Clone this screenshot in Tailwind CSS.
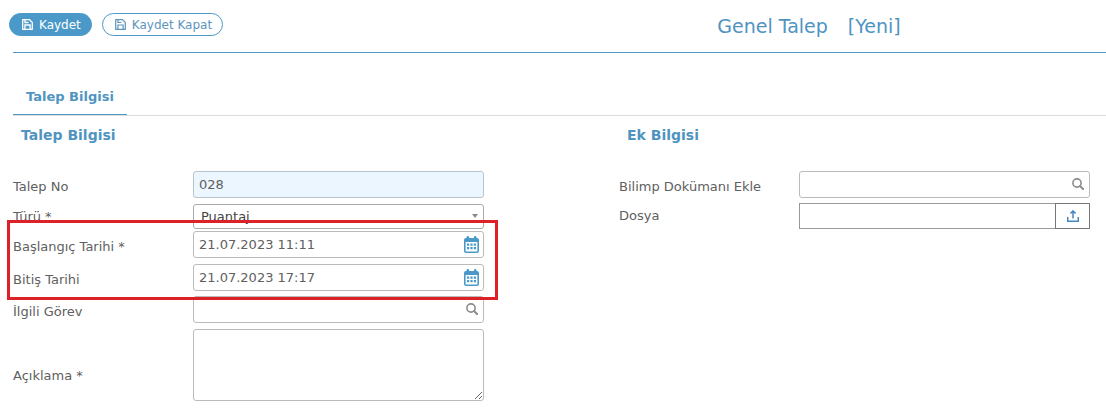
<!DOCTYPE html>
<html lang="tr">
<head>
  <meta charset="UTF-8">
  <meta name="viewport" content="width=device-width, initial-scale=1.0">
  <title>Genel Talep [Yeni]</title>
  <script src="https://cdn.jsdelivr.net/npm/@tailwindcss/browser@4"></script>
</head>
<body class="bg-white font-['DejaVu_Sans',sans-serif] text-[13px] text-[#606060]">

  <!-- header -->
  <header class="flex h-[52px] items-center pb-[3px]">
    <div class="flex w-[512px] gap-[10px] pl-[9px] text-[12px]">
      <button type="button" class="flex h-[23px] items-center gap-[6px] rounded-full border border-[#4a99c8] bg-[#4a99c8] pr-[10px] pl-3 font-medium text-white">
        <svg class="size-[11px]" viewBox="0 0 11 11" fill="none" stroke="currentColor" stroke-width="1.3"><path d="M.7.7h6.800l2.800 2.800v6.800H.7z" stroke-linejoin="round"/><path d="M3 1v2.500h3.500"/><path d="M2.900 10.200V6h5.200v4.200"/></svg>
        Kaydet
      </button>
      <button type="button" class="flex h-[23px] items-center gap-[6px] rounded-full border border-[#4a99c8] bg-white pr-[10px] pl-3 text-[#5d94bd]">
        <svg class="size-[11px]" viewBox="0 0 11 11" fill="none" stroke="currentColor" stroke-width="1.2"><path d="M.7.7h6.800l2.800 2.800v6.800H.7z" stroke-linejoin="round"/><path d="M3 1v2.500h3.500"/><path d="M2.900 10.200V6h5.200v4.200"/></svg>
        Kaydet Kapat
      </button>
    </div>
    <h1 class="flex flex-1 justify-center gap-[20px] pt-1 text-[19px] text-[#4f94c1]"><span>Genel Talep</span><span>[Yeni]</span></h1>
  </header>

  <!-- tabs -->
  <nav class="ml-[13px] border-t border-[#5599c5] pt-[29px]">
    <div class="flex border-b border-[#dcdcdc]">
      <a href="#talep" class="border-b border-[#4a99c8] px-[13px] pt-[6px] pb-2 leading-[18px] font-bold text-[#4f94c1]">Talep Bilgisi</a>
    </div>
  </nav>

  <!-- form -->
  <form id="talep" class="grid grid-cols-2 gap-x-[135px] pt-[10px] pr-4 pl-[13px]">
    <section>
      <h2 class="pl-2 text-[14px] leading-[18px] font-bold text-[#4f94c1]">Talep Bilgisi</h2>

      <div class="mt-[27px] flex items-center">
        <label for="no" class="w-[180px] pt-1">Talep No</label>
        <input id="no" type="text" value="028" class="h-[27px] min-w-0 flex-1 rounded-[3px] border border-[#b9c3cb] bg-[#ecf6fe] px-[5px]">
      </div>

      <div class="mt-[6px] flex items-center">
        <label for="tur" class="w-[180px]">Türü *</label>
        <div class="relative flex flex-1">
          <select id="tur" class="h-[25px] w-full appearance-none rounded-[3px] border border-[#aaaaaa] bg-white px-[7px] text-[#444]">
            <option>Puantaj</option>
          </select>
          <svg class="pointer-events-none absolute top-[10px] right-[6px] h-[4px] w-[6px]" viewBox="0 0 6 4" fill="#888"><path d="M0 0h6L3 4z"/></svg>
        </div>
      </div>

      <!-- highlighted date range -->
      <div class="relative mt-[2px]">
        <div class="flex items-center">
          <label for="baslangic" class="w-[180px] pt-1">Başlangıç Tarihi *</label>
          <div class="relative flex flex-1">
            <input id="baslangic" type="text" value="21.07.2023 11:11" class="h-[27px] w-full rounded-[3px] border border-[#bbb] px-[5px]">
            <button type="button" aria-label="Takvim" class="absolute top-[5px] right-[5px]">
              <svg class="h-[17px] w-[15px]" viewBox="0 0 15 17"><path fill="#4a99c8" fill-rule="evenodd" d="M2 2h11a2 2 0 0 1 2 2v11a2 2 0 0 1-2 2H2a2 2 0 0 1-2-2V4a2 2 0 0 1 2-2zM1.600 6v9.400h11.800V6z"/><path stroke="#4a99c8" stroke-width="2.600" stroke-linecap="round" d="M3.800 1.300v2.500M11.200 1.300v2.500"/><path fill="#4a99c8" d="M3 7.500h2.200v2.200H3zM6.400 7.500h2.200v2.200H6.400zM9.800 7.500H12v2.200H9.800zM3 11h2.200v2.200H3zM6.400 11h2.200v2.200H6.400zM9.800 11H12v2.200H9.800z"/></svg>
            </button>
          </div>
        </div>
        <div class="mt-[6px] flex items-center">
          <label for="bitis" class="w-[180px] pt-1">Bitiş Tarihi</label>
          <div class="relative flex flex-1">
            <input id="bitis" type="text" value="21.07.2023 17:17" class="h-[27px] w-full rounded-[3px] border border-[#bbb] px-[5px]">
            <button type="button" aria-label="Takvim" class="absolute top-[5px] right-[5px]">
              <svg class="h-[17px] w-[15px]" viewBox="0 0 15 17"><path fill="#4a99c8" fill-rule="evenodd" d="M2 2h11a2 2 0 0 1 2 2v11a2 2 0 0 1-2 2H2a2 2 0 0 1-2-2V4a2 2 0 0 1 2-2zM1.600 6v9.400h11.800V6z"/><path stroke="#4a99c8" stroke-width="2.600" stroke-linecap="round" d="M3.800 1.300v2.500M11.200 1.300v2.500"/><path fill="#4a99c8" d="M3 7.500h2.200v2.200H3zM6.400 7.500h2.200v2.200H6.400zM9.800 7.500H12v2.200H9.800zM3 11h2.200v2.200H3zM6.400 11h2.200v2.200H6.400zM9.800 11H12v2.200H9.800z"/></svg>
            </button>
          </div>
        </div>
        <div class="pointer-events-none absolute -top-[11px] -right-[14px] -bottom-[9px] -left-[6px] z-10 border-3 border-[#dc2228]"></div>
      </div>

      <div class="mt-[5px] flex items-center">
        <label for="gorev" class="w-[180px] pt-1">İlgili Görev</label>
        <div class="relative flex flex-1">
          <input id="gorev" type="text" class="h-[27px] w-full rounded-[3px] border border-[#bbb] px-[5px]">
          <button type="button" aria-label="Ara" class="absolute top-[7px] right-[6px]">
            <svg class="size-[12px]" viewBox="0 0 12 12" fill="none" stroke="#8c8c8c"><circle cx="5" cy="5" r="4.100" stroke-width="1.600"/><path d="M8 8l3.300 3.300" stroke-width="2" stroke-linecap="round"/></svg>
          </button>
        </div>
      </div>

      <div class="mt-[6px] flex items-center">
        <label for="aciklama" class="w-[180px] pt-[22px]">Açıklama *</label>
        <textarea id="aciklama" class="h-[72px] min-w-0 flex-1 resize-y rounded-[3px] border border-[#bbb] px-[5px]"></textarea>
      </div>
    </section>

    <section>
      <h2 class="pl-2 text-[14px] leading-[18px] font-bold text-[#4f94c1]">Ek Bilgisi</h2>

      <div class="mt-[27px] flex items-center">
        <label for="dokuman" class="w-[180px] pt-1">Bilimp Dokümanı Ekle</label>
        <div class="relative flex flex-1">
          <input id="dokuman" type="text" class="h-[27px] w-full rounded-[3px] border border-[#bbb] px-[5px]">
          <button type="button" aria-label="Ara" class="absolute top-[7px] right-[6px]">
            <svg class="size-[12px]" viewBox="0 0 12 12" fill="none" stroke="#8c8c8c"><circle cx="5" cy="5" r="4.100" stroke-width="1.600"/><path d="M8 8l3.300 3.300" stroke-width="2" stroke-linecap="round"/></svg>
          </button>
        </div>
      </div>

      <div class="mt-[5px] flex items-center">
        <label for="dosya" class="w-[180px]">Dosya</label>
        <div class="flex flex-1">
          <input id="dosya" type="text" class="h-[26px] min-w-0 flex-1 border border-r-0 border-[#999] px-[5px]">
          <button type="button" aria-label="Dosya yükle" class="flex h-[26px] w-[35px] items-center justify-center border border-[#777]">
            <svg class="size-[12px]" viewBox="0 0 12 12" fill="none" stroke="#4585c4" stroke-width="1.500"><path d="M.7 7v4.300h10.600V7M6 8.500V1M3.400 3.500L6 .9l2.600 2.600"/></svg>
          </button>
        </div>
      </div>
    </section>
  </form>
</body>
</html>
